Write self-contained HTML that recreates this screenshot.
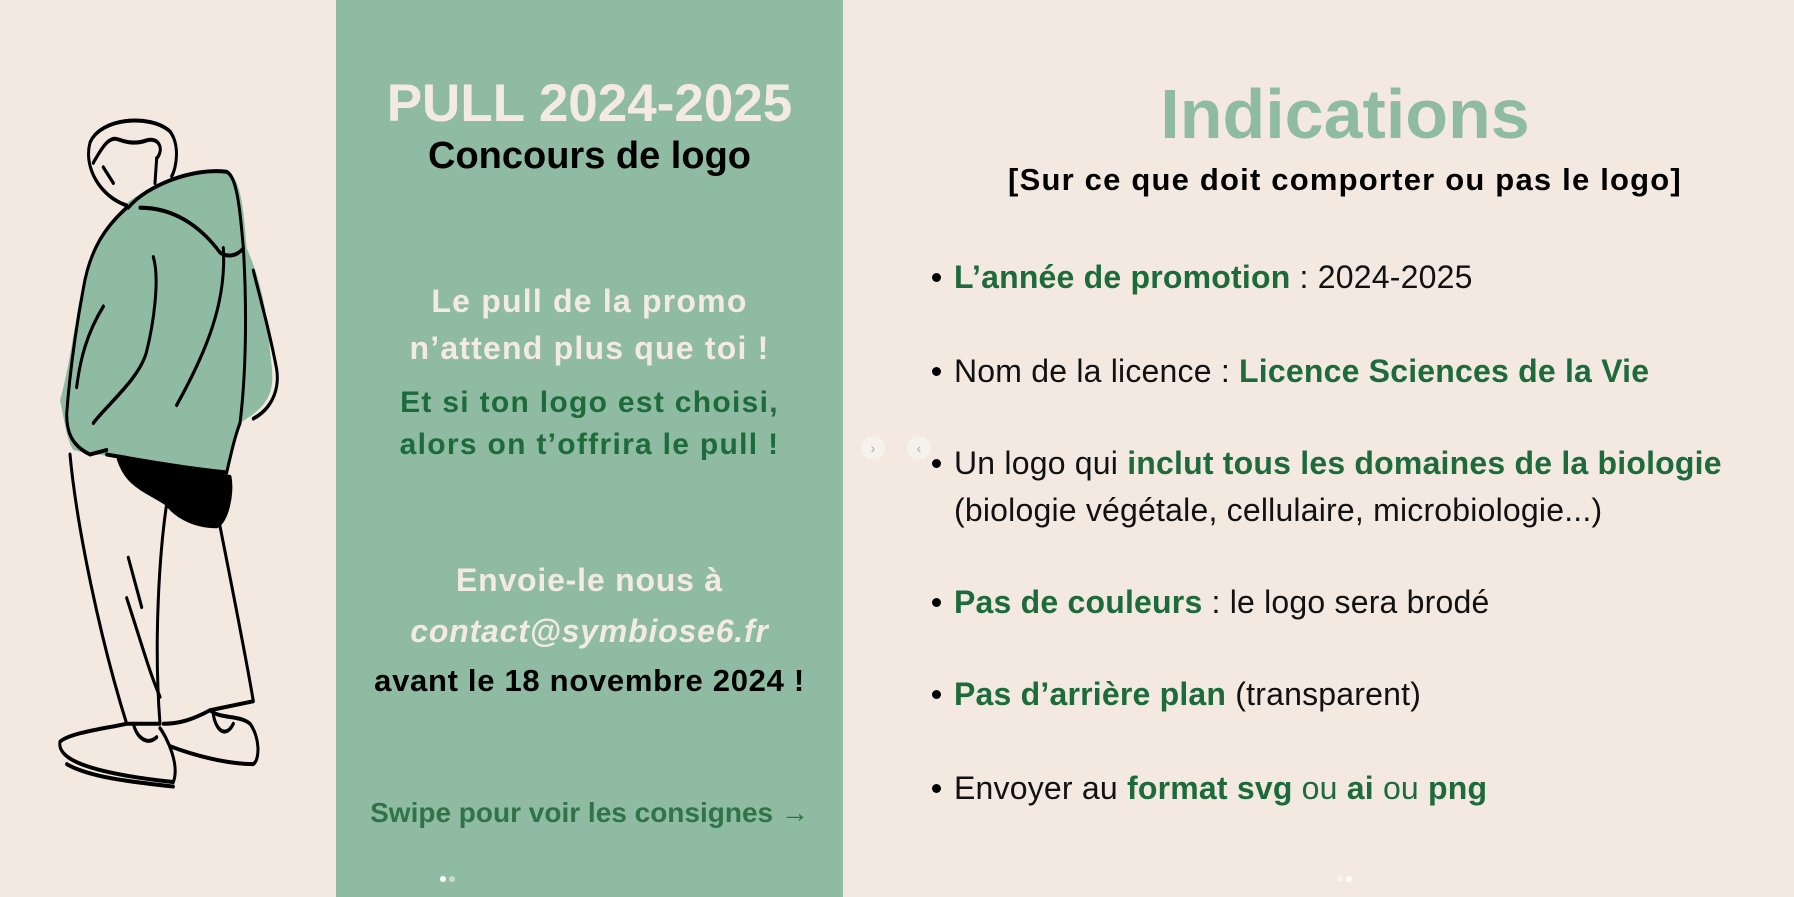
<!DOCTYPE html>
<html><head><meta charset="utf-8"><style>
*{margin:0;padding:0;box-sizing:border-box}
body{width:1794px;height:897px;background:#f3e9e1;position:relative;overflow:hidden;font-family:"Liberation Sans",sans-serif}
.panel{position:absolute;left:336px;top:0;width:507px;height:897px;background:#8fbba2}
.c{position:absolute;left:336px;width:507px;text-align:center;white-space:nowrap}
.t{font-weight:bold}
.g{color:#1d6a3b}
.l{color:#f3ebe2}
.bul{position:absolute;left:954px;white-space:nowrap;font-size:32px;color:#111;line-height:1;letter-spacing:0.2px}
.bul:before{content:"";position:absolute;left:-22px;top:12px;width:9px;height:9px;border-radius:50%;background:#000}
.bul.nb:before{display:none}
.bul b{color:#1d6a3b}
.btn{position:absolute;width:24px;height:24px;border-radius:50%;background:#f7f1ec;top:436px;color:#aaa;font-size:14px;text-align:center;line-height:24px}
.dot{position:absolute;width:6px;height:6px;border-radius:50%;background:#fff;top:876px}
</style></head><body>
<div class="panel"></div>
<svg style="position:absolute;left:40px;top:100px" width="260" height="700" viewBox="0 0 780 1560" preserveAspectRatio="none" fill="none" stroke="#000" stroke-width="9" stroke-linecap="round" stroke-linejoin="round">
<path d="M260,230 C330,190 460,150 560,160 C600,170 610,230 620,330 C650,380 680,450 690,560 C700,620 710,660 640,700 L600,720 C580,760 570,800 560,830 C450,820 300,810 250,800 C200,790 150,790 100,780 C80,760 70,700 60,670 C100,560 110,450 140,380 C170,320 210,280 260,230 Z" fill="#8fbba2" stroke="none"/>
<path d="M235,800 C300,800 450,830 570,840 C580,880 560,940 530,950 C450,950 400,920 380,900 C320,870 260,860 235,800 Z" fill="#000"/>
<path d="M260,235 C180,215 130,150 150,95 C180,40 330,30 390,70 C420,100 410,150 395,170"/>
<path d="M160,140 C190,100 210,80 235,88 C260,95 290,98 320,90 C360,82 372,112 350,130"/>
<path d="M190,150 L220,185 M350,130 L345,185"/>
<path d="M265,240 C320,190 460,150 560,160 C590,170 600,240 610,330 C590,350 560,350 540,340 C480,280 400,240 300,240"/>
<path d="M260,240 C200,280 150,330 130,420 C110,500 90,600 80,700 C80,740 95,770 150,790 L200,780"/>
<path d="M340,350 C360,400 340,500 320,560 C300,620 200,680 160,720"/>
<path d="M190,460 C140,520 120,580 110,640"/>
<path d="M550,330 C560,450 500,560 410,680"/>
<path d="M640,380 C660,440 690,520 710,600 C720,650 690,690 640,710 M610,330 C620,450 620,600 600,720 C580,760 570,800 560,830"/>
<path d="M200,790 C280,800 420,820 560,830"/>
<path d="M90,790 C110,950 180,1200 260,1390 L360,1390 C340,1200 360,1000 380,900 M540,950 C580,1100 620,1250 640,1340 L510,1360 C460,1380 420,1390 370,1390"/>
<path d="M265,1020 L305,1130 M260,1110 C300,1200 330,1280 360,1330"/>
<path d="M260,1390 C200,1400 90,1410 60,1430 C50,1470 150,1500 400,1520 C420,1480 380,1420 360,1400 M280,1390 C290,1420 320,1440 350,1420 M80,1480 C150,1510 280,1520 400,1530"/>
<path d="M510,1360 C540,1380 600,1370 630,1390 C660,1420 660,1470 640,1480 C560,1480 460,1460 390,1440 M520,1370 C530,1410 560,1420 580,1390"/>
</svg>
<div class="c t l" style="top:76px;font-size:53px;line-height:56px">PULL 2024-2025</div>
<div class="c t" style="top:136px;font-size:38px;line-height:40px;color:#000">Concours de logo</div>
<div class="c t l" style="top:283px;font-size:32px;line-height:36px;letter-spacing:1.2px">Le pull de la promo</div>
<div class="c t l" style="top:330px;font-size:32px;line-height:36px;letter-spacing:1.2px">n’attend plus que toi !</div>
<div class="c t g" style="top:385px;font-size:30px;line-height:36px;letter-spacing:1.3px">Et si ton logo est choisi,</div>
<div class="c t g" style="top:427px;font-size:30px;line-height:36px;letter-spacing:1.3px">alors on t’offrira le pull !</div>
<div class="c t l" style="top:562px;font-size:32px;line-height:36px;letter-spacing:0.8px">Envoie-le nous à</div>
<div class="c t l" style="top:613px;font-size:32px;line-height:36px;font-style:italic;letter-spacing:0.8px">contact@symbiose6.fr</div>
<div class="c t" style="top:663px;font-size:31px;line-height:36px;color:#000;letter-spacing:0.7px">avant le 18 novembre 2024 !</div>
<div class="c t" style="top:797px;font-size:28px;line-height:32px;color:#2f7447">Swipe pour voir les consignes →</div>
<div class="dot" style="left:440px"></div><div class="dot" style="left:449px;opacity:.5"></div>
<div class="btn" style="left:861px">&#x203A;</div><div class="btn" style="left:907px">&#x2039;</div>
<div style="position:absolute;left:1000px;width:690px;top:78px;text-align:center;font-size:70px;font-weight:bold;color:#8fbba2;line-height:72px">Indications</div>
<div style="position:absolute;left:980px;width:730px;top:163px;text-align:center;font-size:31px;font-weight:bold;color:#000;line-height:34px;letter-spacing:1.2px">[Sur ce que doit comporter ou pas le logo]</div>
<div class="bul" style="top:261px"><b>L’année de promotion</b> : 2024-2025</div>
<div class="bul" style="top:355px">Nom de la licence : <b>Licence Sciences de la Vie</b></div>
<div class="bul" style="top:447px">Un logo qui <b>inclut tous les domaines de la biologie</b></div>
<div class="bul nb" style="top:494px">(biologie végétale, cellulaire, microbiologie...)</div>
<div class="bul" style="top:586px"><b>Pas de couleurs</b> : le logo sera brodé</div>
<div class="bul" style="top:678px"><b>Pas d’arrière plan</b> (transparent)</div>
<div class="bul" style="top:772px">Envoyer au <b>format svg</b> <span style="color:#1d6a3b">ou</span> <b>ai</b> <span style="color:#1d6a3b">ou</span> <b>png</b></div>
<div class="dot" style="left:1337px;opacity:.5"></div><div class="dot" style="left:1346px"></div>
</body></html>
